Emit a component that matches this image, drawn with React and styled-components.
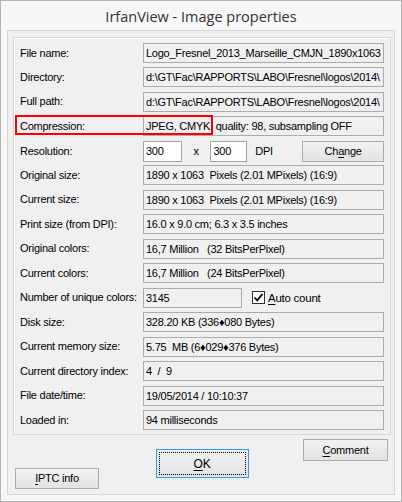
import React from 'react'
import styled, {createGlobalStyle} from 'styled-components'

const GlobalStyle = createGlobalStyle`
  html, body {
    margin: 0;
    padding: 0;
    background: #fff;
  }
  * { box-sizing: border-box; }
`

const rows = [
  {label: 'File name:', value: 'Logo_Fresnel_2013_Marseille_CMJN_1890x1063'},
  {label: 'Directory:', value: 'd:\\GT\\Fac\\RAPPORTS\\LABO\\Fresnel\\logos\\2014\\'},
  {label: 'Full path:', value: 'd:\\GT\\Fac\\RAPPORTS\\LABO\\Fresnel\\logos\\2014\\'},
  {label: 'Compression:', value: 'JPEG, CMYK, quality: 98, subsampling OFF', marked: true},
  {label: 'Resolution:', kind: 'resolution'},
  {label: 'Original size:', value: '1890 x 1063  Pixels (2.01 MPixels) (16:9)'},
  {label: 'Current size:', value: '1890 x 1063  Pixels (2.01 MPixels) (16:9)'},
  {label: 'Print size (from DPI):', value: '16.0 x 9.0 cm; 6.3 x 3.5 inches'},
  {label: 'Original colors:', value: '16,7 Million   (32 BitsPerPixel)'},
  {label: 'Current colors:', value: '16,7 Million   (24 BitsPerPixel)'},
  {label: 'Number of unique colors:', kind: 'unique', value: '3145'},
  {label: 'Disk size:', value: '328.20 KB (336\u2666080 Bytes)'},
  {label: 'Current memory size:', value: '5.75  MB (6\u2666029\u2666376 Bytes)'},
  {label: 'Current directory index:', value: '4  /  9'},
  {label: 'File date/time:', value: '19/05/2014 / 10:10:37'},
  {label: 'Loaded in:', value: '94 milliseconds'},
]

export default function App() {
  return (
    <>
      <GlobalStyle/>
      <Window>
        <TitleBar>IrfanView - Image properties</TitleBar>
        <Client>
          <GroupBox>
            {rows.map(row => (
              <Row key={row.label}>
                <Label>{row.label}</Label>
                {row.kind === 'resolution' ? (
                  <Inline>
                    <Input $width={40}>300</Input>
                    <Sep>x</Sep>
                    <Input $width={38}>300</Input>
                    <Unit>DPI</Unit>
                    <Button $width={85} $height={21}>Ch<u>a</u>nge</Button>
                  </Inline>
                ) : row.kind === 'unique' ? (
                  <Inline>
                    <Field $width={99}>{row.value}</Field>
                    <Check>
                      <Box>
                        <svg width="11" height="11" viewBox="0 0 11 11">
                          <path d="M1.5 5.5 L4.2 8.3 L9.5 2" fill="none" stroke="#000" strokeWidth="1.8"/>
                        </svg>
                      </Box>
                      <span><u>A</u>uto count</span>
                    </Check>
                  </Inline>
                ) : (
                  <Field>{row.value}</Field>
                )}
                {row.marked && <Marker/>}
              </Row>
            ))}
          </GroupBox>
          <Footer>
            <Button $width={84} $height={21} $place="iptc"><u>I</u>PTC info</Button>
            <OkButton><u>O</u>K</OkButton>
            <Button $width={85} $height={22} $place="comment"><u>C</u>omment</Button>
          </Footer>
        </Client>
      </Window>
    </>
  )
}

const Window = styled.div`
  width: 402px;
  height: 502px;
  border: 1px solid #b4b4b4;
  background: #f7f7f7;
  display: flex;
  flex-direction: column;
  font-family: 'Liberation Sans', Arial, sans-serif;
  font-size: 11px;
  letter-spacing: -0.25px;
  color: #000;
`

const TitleBar = styled.div`
  height: 29px;
  display: flex;
  align-items: center;
  justify-content: center;
  padding-top: 1px;
  font-family: 'Open Sans', 'Noto Sans', sans-serif;
  font-size: 14.5px;
  letter-spacing: 0;
  color: #333;
`

const Client = styled.div`
  flex: 1;
  margin: 0 6px 6px 6px;
  border: 1px solid #d6d6d6;
  background: #f0f0f0;
  padding: 6px 3px 0 5px;
  display: flex;
  flex-direction: column;
`

const GroupBox = styled.div`
  border: 1px solid #d8d8d8;
  box-shadow: inset 1px 1px 0 #fff;
  padding: 5px 6px 4px 6px;
  display: grid;
  grid-template-columns: minmax(0, 1fr);
  grid-auto-rows: 20px;
  row-gap: 4.47px;
`

const Row = styled.div`
  position: relative;
  display: grid;
  grid-template-columns: 123px minmax(0, 1fr);
  align-items: center;
  min-width: 0;
`

const Label = styled.div`
  white-space: nowrap;
  padding-bottom: 1px;
`

const Field = styled.div`
  height: 20px;
  width: ${p => (p.$width ? `${p.$width}px` : 'auto')};
  min-width: 0;
  border: 1px solid #acacac;
  background: #f0f0f0;
  padding: 0 2px;
  display: flex;
  align-items: center;
  white-space: pre;
  overflow: hidden;
`

const Input = styled(Field)`
  height: 21px;
  background: #fff;
  border-color: #a5a5a5;
`

const Inline = styled.div`
  display: flex;
  align-items: center;
`

const Sep = styled.span`
  width: 30px;
  text-align: center;
`

const Unit = styled.span`
  margin-left: 8px;
  width: 49px;
`

const Button = styled.div`
  width: ${p => p.$width}px;
  height: ${p => p.$height}px;
  border: 1px solid #acacac;
  background: linear-gradient(#f2f2f2, #e3e3e3);
  display: flex;
  align-items: center;
  justify-content: center;
  padding-bottom: 1px;
  white-space: nowrap;
  justify-self: ${p => (p.$place === 'iptc' ? 'start' : p.$place === 'comment' ? 'end' : 'auto')};
  align-self: ${p => (p.$place === 'iptc' ? 'end' : p.$place === 'comment' ? 'start' : 'auto')};
  margin: ${p => (p.$place === 'iptc' ? '0 0 5px 2px' : p.$place === 'comment' ? '4px 3px 0 0' : '0')};
  u { text-decoration-thickness: 1px; text-underline-offset: 2px; }
`

const OkButton = styled.div`
  position: relative;
  width: 93px;
  height: 29px;
  margin-top: 14px;
  align-self: start;
  border: 1px solid #3399ff;
  background: linear-gradient(#f2f2f2, #e3e3e3);
  display: flex;
  align-items: center;
  justify-content: center;
  font-size: 12px;
  u { text-decoration-thickness: 1px; text-underline-offset: 2px; }
  &::after {
    content: '';
    position: absolute;
    inset: 2px;
    border: 1px dotted #000;
  }
`

const Check = styled.div`
  display: flex;
  align-items: center;
  margin-left: 10px;
  gap: 3px;
  font-size: 11.5px;
  u { text-decoration-thickness: 1px; text-underline-offset: 2px; }
`

const Box = styled.div`
  width: 13px;
  height: 13px;
  border: 1px solid #333;
  background: #fff;
  display: flex;
  align-items: center;
  justify-content: center;
`

const Marker = styled.div`
  position: absolute;
  left: -5px;
  top: -1px;
  width: 198px;
  height: 20px;
  border: 2px solid #f00;
  pointer-events: none;
`

const Footer = styled.div`
  flex: 1;
  display: grid;
  grid-template-columns: 1fr auto 1fr;
`
